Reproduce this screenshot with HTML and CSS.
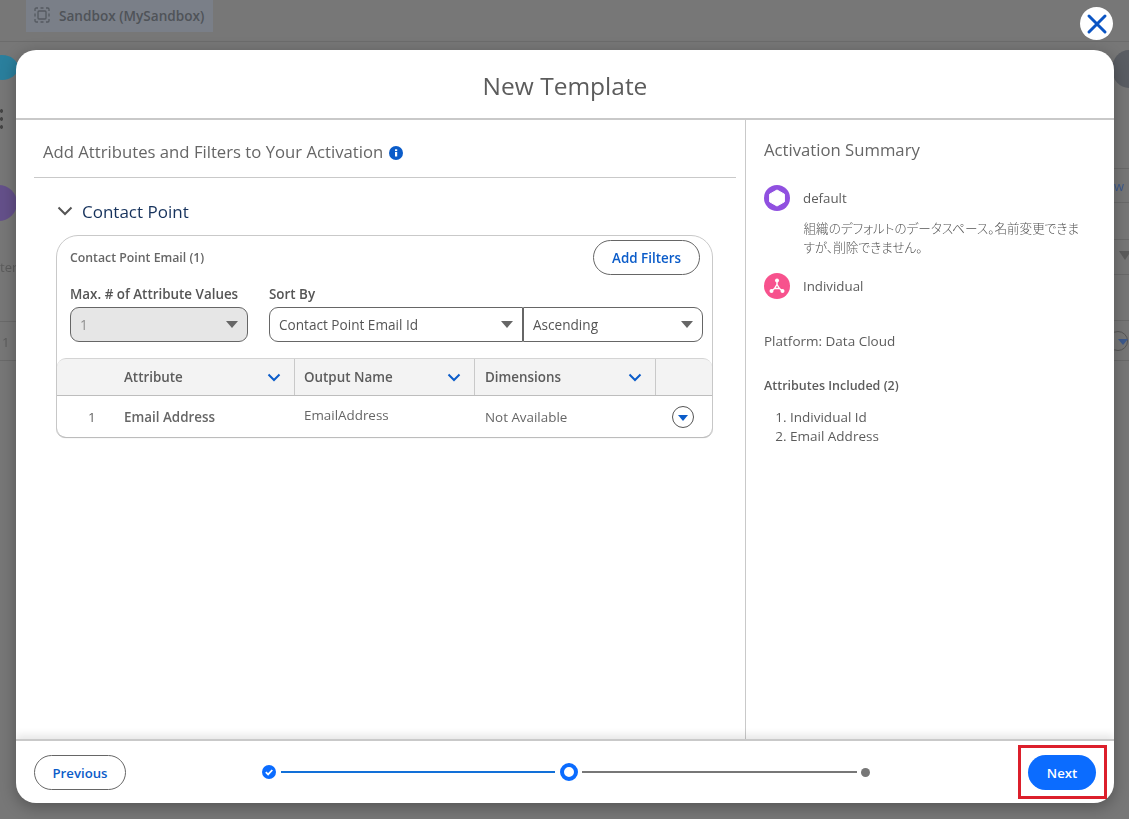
FILE: index.html
```html
<!DOCTYPE html>
<html lang="en">
<head>
  <meta charset="UTF-8">
  <meta name="viewport" content="width=device-width, initial-scale=1.0">
  <title>New Template</title>
  <link rel="stylesheet" href="styles.css">
</head>
<body>

  <!-- Page behind the dialog -->
  <div class="backdrop">
    <div class="top-bar">
      <div class="sandbox-chip">
        <svg width="16" height="16" viewBox="0 0 16 16" fill="none" stroke="#555a60" stroke-width="1.3">
          <rect x="4" y="4" width="8" height="8" rx="1"/>
          <path d="M1 4V2.2C1 1.5 1.5 1 2.2 1H4M6.5 1h3M12 1h1.8c.7 0 1.2.5 1.2 1.2V4M15 6.5v3M15 12v1.8c0 .7-.5 1.2-1.2 1.2H12M9.5 15h-3M4 15H2.2C1.5 15 1 14.5 1 13.8V12M1 9.500v-3"/>
        </svg>
        <span>Sandbox (MySandbox)</span>
      </div>
    </div>
    <div class="bg-cloud"></div>
    <div class="bg-dots"></div>
    <div class="bg-purple"></div>
    <div class="bg-text bg-ter">ter</div>
    <div class="bg-text bg-one">1</div>
    <div class="bg-avatar"></div>
    <div class="bg-line bg-line-a"></div>
    <div class="bg-line bg-line-b"></div>
    <div class="bg-line bg-line-c"></div>
    <div class="bg-line bg-line-d"></div>
    <div class="bg-line bg-line-e"></div>
    <div class="bg-line bg-line-f"></div>
    <div class="bg-line bg-line-g"></div>
    <div class="bg-line bg-line-h"></div>
    <div class="bg-text bg-w">w</div>
    <div class="bg-funnel"></div>
    <div class="bg-round"><i></i></div>
  </div>

  <!-- Close -->
  <div class="close-button">
    <svg width="22" height="22" viewBox="0 0 22 22" fill="none" stroke="#0b55c4" stroke-width="3" stroke-linecap="round">
      <path d="M3 3L19 19M19 3L3 19"/>
    </svg>
  </div>

  <!-- Dialog -->
  <div class="modal">
    <div class="modal-header">New Template</div>

    <div class="modal-body">
      <div class="main-col">
        <div class="main-title">
          <span>Add Attributes and Filters to Your Activation</span>
          <svg width="14" height="14" viewBox="0 0 14 14">
            <circle cx="7" cy="7" r="7" fill="#0b5cc9"/>
            <rect x="6" y="6" width="2.2" height="4.5" fill="#fff"/>
            <rect x="6" y="3.3" width="2.2" height="1.8" fill="#fff"/>
          </svg>
        </div>

        <div class="section-head">
          <svg width="16" height="10" viewBox="0 0 16 10" fill="none" stroke="#555" stroke-width="2">
            <path d="M1.5 1.5L8 8l6.500-6.500"/>
          </svg>
          <span>Contact Point</span>
        </div>

        <div class="card">
          <div class="card-head">
            <span class="card-title">Contact Point Email (1)</span>
            <div class="btn btn-outline btn-filters">Add Filters</div>
          </div>

          <div class="fields">
            <div class="field field-max">
              <label>Max. # of Attribute Values</label>
              <div class="select select-disabled"><span>1</span><i class="caret"></i></div>
            </div>
            <div class="field">
              <label>Sort By</label>
              <div class="select-group">
                <div class="select select-left"><span>Contact Point Email Id</span><i class="caret"></i></div>
                <div class="select select-right"><span>Ascending</span><i class="caret"></i></div>
              </div>
            </div>
          </div>

          <div class="table">
            <div class="table-row table-head">
              <div class="cell cell-num"></div>
              <div class="cell cell-attr">
                <span>Attribute</span>
                <svg class="chev" width="14" height="9" viewBox="0 0 14 9" fill="none" stroke="#0b5cc9" stroke-width="2"><path d="M1.5 1.5L7 7l5.500-5.500"/></svg>
              </div>
              <div class="cell cell-out">
                <span>Output Name</span>
                <svg class="chev" width="14" height="9" viewBox="0 0 14 9" fill="none" stroke="#0b5cc9" stroke-width="2"><path d="M1.5 1.5L7 7l5.500-5.500"/></svg>
              </div>
              <div class="cell cell-dim">
                <span>Dimensions</span>
                <svg class="chev" width="14" height="9" viewBox="0 0 14 9" fill="none" stroke="#0b5cc9" stroke-width="2"><path d="M1.5 1.5L7 7l5.500-5.500"/></svg>
              </div>
              <div class="cell cell-act"></div>
            </div>
            <div class="table-row table-data">
              <div class="cell cell-num">1</div>
              <div class="cell cell-attr"><b>Email Address</b></div>
              <div class="cell cell-out cell-raised">EmailAddress</div>
              <div class="cell cell-dim">Not Available</div>
              <div class="cell cell-act">
                <div class="row-menu"><i></i></div>
              </div>
            </div>
          </div>
        </div>
      </div>

      <div class="side-col">
        <div class="side-title">Activation Summary</div>

        <div class="summary-item">
          <svg class="summary-icon" width="26" height="26" viewBox="0 0 26 26">
            <circle cx="13" cy="13" r="13" fill="#9050e0"/>
            <path d="M13 5l7.400 4.200v7.600L13 21l-7.400-4.200V9.200z" fill="#fff" stroke="#fff" stroke-linejoin="round"/>
          </svg>
          <div class="summary-text">default</div>
        </div>
        <div class="summary-desc" lang="ja">組織のデフォルトのデータスペース。名前変更できますが、削除できません。</div>

        <div class="summary-item summary-item-b">
          <svg class="summary-icon" width="26" height="26" viewBox="0 0 26 26">
            <circle cx="13" cy="13" r="13" fill="#f7528d"/>
            <path d="M13 8v3.500M10.500 15.500l-3 2.500M15.500 15.500l3 2.500M13 11.500l2.500 4h-5z" stroke="#fff" stroke-width="1.4" fill="none"/>
            <circle cx="13" cy="7.500" r="2" fill="#fff"/>
            <circle cx="7.500" cy="18" r="2" fill="#fff"/>
            <circle cx="18.500" cy="18" r="2" fill="#fff"/>
          </svg>
          <div class="summary-text">Individual</div>
        </div>

        <div class="platform">Platform: Data Cloud</div>
        <div class="attr-title">Attributes Included (2)</div>
        <ol class="attr-list">
          <li>Individual Id</li>
          <li>Email Address</li>
        </ol>
      </div>
    </div>

    <div class="modal-footer">
      <div class="btn btn-outline btn-prev">Previous</div>

      <div class="stepper">
        <svg width="14" height="14" viewBox="0 0 14 14">
          <circle cx="7" cy="7" r="7" fill="#0b6cff"/>
          <path d="M3.8 7.200l2.300 2.200 4.200-4.400" fill="none" stroke="#fff" stroke-width="1.8"/>
        </svg>
        <div class="step-line step-line-done"></div>
        <div class="step-ring"></div>
        <div class="step-line step-line-todo"></div>
        <div class="step-dot"></div>
      </div>

      <div class="btn btn-next">Next</div>
    </div>
  </div>

  <!-- Red highlight box -->
  <div class="highlight"></div>

</body>
</html>
```

FILE: styles.css
```css
/* Basic Reset */
* {
  margin: 0;
  padding: 0;
  box-sizing: border-box;
}

body {
  width: 1129px;
  height: 819px;
  overflow: hidden;
  position: relative;
  background-color: #777;
  font-family: "Open Sans", "Noto Sans CJK JP", sans-serif;
  color: #5c5c5c;
}

/* Page behind the dialog */
.backdrop {
  height: 100%;
  filter: blur(0.4px);
}

.top-bar {
  height: 42px;
  border-bottom: 1px solid #6c6c6c;
  padding-left: 26px;
}

.sandbox-chip {
  width: 187px;
  height: 32px;
  background-color: #7a7f88;
  display: flex;
  align-items: center;
  gap: 9px;
  padding-left: 8px;
  padding-bottom: 2px;
  color: #4f5358;
  font-size: 13.6px;
  font-weight: 600;
}

.bg-cloud {
  position: absolute;
  left: -14px;
  top: 55px;
  width: 32px;
  height: 25px;
  border-radius: 50%;
  background-color: #2a7f9d;
}

.bg-dots {
  position: absolute;
  left: 0;
  top: 107px;
  width: 3px;
  height: 24px;
  background: radial-gradient(circle, #444 1.5px, transparent 2px) 0 0 / 3px 8px;
}

.bg-purple {
  position: absolute;
  left: -20px;
  top: 185px;
  width: 37px;
  height: 36px;
  border-radius: 50%;
  background-color: #64508a;
}

.bg-text {
  position: absolute;
  color: #5c5c5c;
  font-size: 13px;
}

.bg-ter {
  left: 0;
  top: 258px;
}

.bg-one {
  left: 2px;
  top: 333px;
}

.bg-w {
  left: 1114px;
  top: 177px;
  color: #3d5a8c;
}

.bg-avatar {
  position: absolute;
  left: 1112px;
  top: 50px;
  width: 34px;
  height: 38px;
  border-radius: 50%;
  background-color: #5a5d63;
}

.bg-line {
  position: absolute;
  height: 1px;
  background-color: #6a6a6a;
}

.bg-line-a { left: 1110px; width: 19px; top: 168px; }
.bg-line-b { left: 1110px; width: 19px; top: 202px; }
.bg-line-c { left: 1110px; width: 19px; top: 239px; }
.bg-line-d { left: 1110px; width: 19px; top: 274px; }
.bg-line-e { left: 1110px; width: 19px; top: 320px; }
.bg-line-f { left: 1110px; width: 19px; top: 360px; }
.bg-line-g { left: 0; width: 16px; top: 321px; }
.bg-line-h { left: 0; width: 16px; top: 360px; }

.bg-funnel {
  position: absolute;
  left: 1119px;
  top: 251px;
  border-left: 6px solid transparent;
  border-right: 6px solid transparent;
  border-top: 9px solid #5c5c5c;
}

.bg-round {
  position: absolute;
  left: 1108px;
  top: 331px;
  width: 20px;
  height: 20px;
  border: 1px solid #555;
  border-radius: 50%;
  display: flex;
  justify-content: center;
  align-items: center;
}

.bg-round i {
  margin-left: 9px;
  margin-top: 2px;
  border-left: 5px solid transparent;
  border-right: 5px solid transparent;
  border-top: 6px solid #3d5a8c;
}

/* Close */
.close-button {
  position: absolute;
  left: 1080px;
  top: 7px;
  width: 33px;
  height: 33px;
  border-radius: 50%;
  background-color: #fff;
  display: flex;
  justify-content: center;
  align-items: center;
}

/* Dialog */
.modal {
  position: absolute;
  left: 16px;
  top: 50px;
  width: 1098px;
  height: 753px;
  background: #fff;
  border-radius: 20px;
  box-shadow: 0 4px 16px rgba(0, 0, 0, 0.3);
  display: flex;
  flex-direction: column;
  overflow: hidden;
}

.modal-header {
  height: 70px;
  border-bottom: 2px solid #c9c9c9;
  display: flex;
  justify-content: center;
  align-items: center;
  padding-top: 2px;
  font-size: 24.5px;
  color: #5c5c5c;
}

.modal-body {
  flex: 1;
  display: flex;
  min-height: 0;
}

/* Left column */
.main-col {
  width: 730px;
  border-right: 1px solid #c9c9c9;
  padding: 0 9px 0 18px;
}

.main-title {
  height: 58px;
  border-bottom: 1px solid #c9c9c9;
  display: flex;
  align-items: center;
  gap: 6px;
  padding-left: 9px;
  padding-top: 6px;
  font-size: 16.7px;
  color: #666;
}

.main-title svg {
  margin-top: 3px;
}

.section-head {
  display: flex;
  align-items: center;
  gap: 9px;
  height: 24px;
  margin-top: 21px;
  margin-left: 23px;
  font-size: 17px;
  color: #16325c;
}

.card {
  width: 657px;
  height: 203px;
  margin-top: 12px;
  margin-left: 22px;
  border: 1px solid #c9c9c9;
  border-radius: 22px 22px 9px 9px;
  display: flex;
  flex-direction: column;
}

.card-head {
  height: 43px;
  display: flex;
  justify-content: space-between;
  align-items: center;
  padding: 0 12px 0 13px;
}

.card-title {
  font-size: 12.3px;
  font-weight: 600;
  color: #666;
}

.btn {
  display: flex;
  justify-content: center;
  align-items: center;
  height: 35px;
  border-radius: 18px;
  font-size: 13.2px;
  font-weight: 600;
}

.btn-outline {
  border: 1px solid #666;
  color: #0b5cc9;
  background: #fff;
}

.btn-filters {
  width: 107px;
  font-size: 13.4px;
}

.fields {
  display: flex;
  gap: 21px;
  padding-left: 13px;
  margin-top: 6px;
}

.field label {
  display: block;
  height: 22px;
  font-size: 13.4px;
  font-weight: 600;
  color: #555;
}

.field-max {
  width: 178px;
}

.select {
  height: 35px;
  border: 1px solid #666;
  border-radius: 9px;
  display: flex;
  justify-content: space-between;
  align-items: center;
  padding: 0 9px;
  font-size: 13.6px;
  color: #555;
  background: #fff;
}

.select-disabled {
  background-color: #e6e6e6;
  color: #8e8e8e;
}

.select-group {
  display: flex;
}

.select-left {
  width: 254px;
  border-radius: 9px 0 0 9px;
}

.select-right {
  width: 180px;
  border-radius: 0 9px 9px 0;
}

.caret {
  border-left: 6.5px solid transparent;
  border-right: 6.5px solid transparent;
  border-top: 7px solid #666;
}

/* Table */
.table {
  margin-top: 16px;
  border-radius: 9px;
  box-shadow: 0 1px 1px #bbb;
}

.table-row {
  display: flex;
}

.table-head {
  height: 38px;
  background-color: #f3f3f3;
  border-top: 1px solid #d4d4d4;
  border-bottom: 1px solid #bdbdbd;
  border-radius: 9px 9px 0 0;
  font-size: 13.4px;
  font-weight: 600;
  color: #5c5c5c;
}

.table-data {
  height: 41px;
  font-size: 13.4px;
  color: #666;
}

.table-data b {
  font-weight: 600;
}

.cell {
  display: flex;
  align-items: center;
  justify-content: space-between;
}

.table-head .cell-attr,
.table-head .cell-out,
.table-head .cell-dim {
  border-right: 1px solid #c9c9c9;
}

.cell-num {
  width: 67px;
  padding-left: 31px;
  justify-content: flex-start;
}

.cell-attr {
  width: 171px;
  padding-right: 13px;
}

.cell-out {
  width: 180px;
  padding-left: 9px;
  padding-right: 13px;
}

.cell-raised {
  padding-bottom: 3px;
}

.cell-dim {
  width: 181px;
  padding-left: 10px;
  padding-right: 13px;
}

.cell-act {
  flex: 1;
  justify-content: flex-end;
  padding-right: 18px;
}

.row-menu {
  width: 22px;
  height: 22px;
  border: 1px solid #555;
  border-radius: 50%;
  display: flex;
  justify-content: center;
  align-items: center;
}

.row-menu i {
  margin-top: 2px;
  border-left: 5px solid transparent;
  border-right: 5px solid transparent;
  border-top: 6px solid #0b5cc9;
}

/* Right column */
.side-col {
  flex: 1;
  padding-left: 18px;
  padding-right: 30px;
}

.side-title {
  height: 24px;
  margin-top: 18px;
  font-size: 16.7px;
  color: #666;
}

.summary-item {
  display: flex;
  align-items: center;
  gap: 13px;
  margin-top: 23px;
  font-size: 13.3px;
}

.summary-item-b {
  margin-top: 16px;
}

.summary-desc {
  margin-top: 8px;
  margin-left: 39.5px;
  font-size: 12.6px;
  line-height: 19px;
  font-weight: 300;
  font-feature-settings: "palt";
  color: #555;
}

.platform {
  margin-top: 33px;
  font-size: 13.5px;
}

.attr-title {
  margin-top: 27px;
  font-size: 12.5px;
  font-weight: 600;
}

.attr-list {
  margin-top: 14px;
  padding-left: 26px;
  font-size: 13.5px;
  line-height: 19px;
}

/* Footer */
.modal-footer {
  height: 64px;
  border-top: 2px solid #c9c9c9;
  box-shadow: 0 -4px 8px rgba(0, 0, 0, 0.1);
  display: flex;
  align-items: center;
  padding: 1px 18px 0;
  position: relative;
}

.btn-prev {
  width: 92px;
}

.stepper {
  display: flex;
  align-items: center;
  margin-left: 136px;
  margin-bottom: 1px;
}

.step-line {
  height: 2px;
}

.step-line-done {
  width: 274px;
  margin-left: 5px;
  background-color: #1270d8;
}

.step-line-todo {
  width: 275px;
  background-color: #777;
  margin-left: 4px;
}

.step-ring {
  width: 18px;
  height: 18px;
  margin-left: 5px;
  border: 4px solid #0b6cff;
  border-radius: 50%;
}

.step-dot {
  width: 9px;
  height: 9px;
  margin-left: 4px;
  background-color: #777;
  border-radius: 50%;
}

.btn-next {
  width: 68px;
  margin-left: auto;
  background-color: #0b6cff;
  color: #fff;
}

/* Red highlight box */
.highlight {
  position: absolute;
  left: 1018px;
  top: 745px;
  width: 89px;
  height: 54px;
  border: 3px solid #dc1f2b;
}
```
